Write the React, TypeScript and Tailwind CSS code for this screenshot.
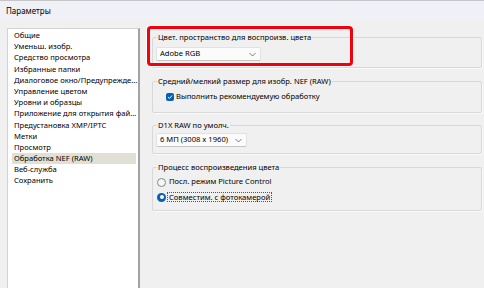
import React from "react";

const pages = [
  "Общие",
  "Уменьш. изобр.",
  "Средство просмотра",
  "Избранные папки",
  "Диалоговое окно/Предупрежде...",
  "Управление цветом",
  "Уровни и образцы",
  "Приложение для открытия фай...",
  "Предустановка XMP/IPTC",
  "Метки",
  "Просмотр",
  "Обработка NEF (RAW)",
  "Веб-служба",
  "Сохранить",
];

function Chevron() {
  return (
    <svg width="7" height="5" viewBox="0 0 7 5" className="shrink-0">
      <path d="M0.5 1 L3.5 4 L6.5 1" fill="none" stroke="#6b6b6b" strokeWidth="0.9" />
    </svg>
  );
}

function Select({ value, width }: { value: string; width: string }) {
  return (
    <div
      className={`${width} h-[14px] flex items-center justify-between pl-[3px] pr-[4px] bg-[#fbfbfb] border border-[#e2e2e2] border-b-[#c4c4c4] rounded-[2px]`}
    >
      <span>{value}</span>
      <Chevron />
    </div>
  );
}

function Group({
  label,
  className,
  children,
}: {
  label: string;
  className: string;
  children: React.ReactNode;
}) {
  return (
    <fieldset
      className={`border border-[#d8d8d8] rounded-[2px] pl-[3px] shadow-[1px_1px_0_#fafafa] ${className}`}
    >
      <legend className="ml-[1px] px-[1px] leading-[10px]">{label}</legend>
      {children}
    </fieldset>
  );
}

export default function App() {
  return (
    <div
      className="w-[484px] h-[288px] overflow-hidden bg-[#f0f0f0] text-black flex flex-col relative"
      style={{ fontFamily: '"Noto Sans", "Liberation Sans", sans-serif' }}
    >
      <div className="h-[20px] shrink-0 border-t border-[#c6c6c6] bg-[#eff1f6] flex items-center pl-[6px] text-[8px]">
        Параметры
      </div>

      <div className="flex flex-1 min-h-0 pt-[8px] pl-[7px] text-[7.6px]">
        <div className="w-[133px] shrink-0 bg-white border-l border-t border-[#d4d4d4] border-r-2 border-r-[#a3a3a3] pt-[1px] pl-[4px] pr-[2px]">
          {pages.map((p) => (
            <div
              key={p}
              className={`h-[11.2px] leading-[11.2px] pl-[2px] whitespace-nowrap ${
                p === "Обработка NEF (RAW)" ? "bg-[#e0e0d7]" : ""
              }`}
            >
              {p}
            </div>
          ))}
        </div>

        <div className="ml-[12px] w-[330px] flex flex-col pt-[4px]">
          <Group label="Цвет. пространство для воспроизв. цвета" className="h-[36px] pt-[5px]">
            <Select value="Adobe RGB" width="w-[105px]" />
          </Group>

          <Group label="Средний/мелкий размер для изобр. NEF (RAW)" className="h-[37px] mt-[8px] pt-[5px]">
            <div className="flex items-center gap-[2px] pl-[10px]">
              <span className="w-[8px] h-[8px] rounded-[2px] bg-[#0a5fb4] flex items-center justify-center">
                <svg width="6" height="6" viewBox="0 0 6 6">
                  <path d="M1 3.2 L2.4 4.5 L5 1.5" fill="none" stroke="#fff" strokeWidth="1" />
                </svg>
              </span>
              <span>Выполнить рекомендуемую обработку</span>
            </div>
          </Group>

          <Group label="D1X RAW по умолч." className="h-[34px] mt-[7px] pt-[3px]">
            <Select value="6 МП (3008 x 1960)" width="w-[91px]" />
          </Group>

          <Group label="Процесс воспроизведения цвета" className="h-[49px] mt-[8px] pt-[5px]">
            <div className="flex items-center gap-[3px] pl-[1px] h-[10px]">
              <span className="w-[9px] h-[9px] rounded-full border border-[#858585] bg-[#f7f7f7]" />
              <span>Посл. режим Picture Control</span>
            </div>
            <div className="flex items-center gap-[1px] pl-[1px] h-[10px] mt-[5px]">
              <span className="w-[9px] h-[9px] rounded-full bg-[#0a5fb4] flex items-center justify-center">
                <span className="w-[4px] h-[4px] rounded-full bg-white" />
              </span>
              <span className="border border-dotted border-[#555] px-[1px] leading-[8px]">
                Совместим. с фотокамерой
              </span>
            </div>
          </Group>
        </div>
      </div>

      <div className="absolute left-[147px] top-[26px] w-[206px] h-[40px] border-[3px] border-[#f2000d] rounded-[4px] shadow-[0_0_0_1px_#fff]" />
    </div>
  );
}
